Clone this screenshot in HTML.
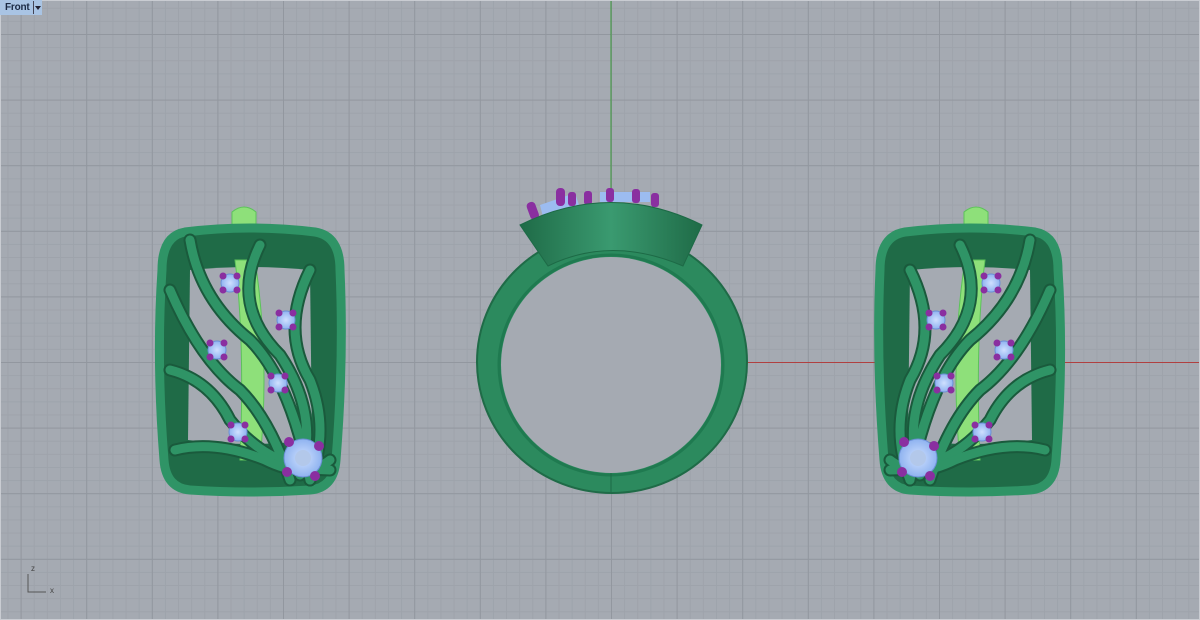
<!DOCTYPE html>
<html><head><style>
html,body{margin:0;padding:0;width:1200px;height:620px;overflow:hidden;background:#a5aab2}
.tab{position:absolute;left:0;top:0;width:42px;height:15px;background:#a9c4e4;font:bold 10px "Liberation Sans",sans-serif;color:#1b2a44;line-height:15px;padding-left:5px;box-sizing:border-box;letter-spacing:-0.2px}
.tab span{position:absolute;left:33px;top:1px;width:1px;height:13px;background:#445}
.tab i{position:absolute;left:35px;top:6px;border:3px solid transparent;border-top:4px solid #223;border-bottom:0}
</style></head><body>
<svg width="1200" height="620" style="position:absolute;left:0;top:0">
<defs>
<pattern id="mi" x="20.6" y="34" width="13.12" height="13.12" patternUnits="userSpaceOnUse"><path d="M0 0.5H13.12M0.5 0V13.12" stroke="#9ea3ab" stroke-width="1" fill="none"/></pattern>
<pattern id="ma" x="20.6" y="34" width="65.6" height="65.6" patternUnits="userSpaceOnUse"><path d="M0 0.5H65.6M0.5 0V65.6" stroke="#92979f" stroke-width="1" fill="none"/></pattern>
<radialGradient id="gem"><stop offset="0" stop-color="#cfe0ff"/><stop offset="1" stop-color="#8fb3f0"/></radialGradient>
<linearGradient id="rg" x1="0" x2="1"><stop offset="0" stop-color="#1f6b47"/><stop offset="0.5" stop-color="#3a9a70"/><stop offset="1" stop-color="#1f6b47"/></linearGradient>
<g id="ear">
 <path d="M72 -18 q12 -10 24 0 v40 h-24z" fill="#8ee07a" stroke="#5cc25a"/>
 <path d="M25 2 Q90 -6 155 2 Q180 6 180 40 Q184 130 176 230 Q174 258 150 260 Q90 264 30 260 Q6 258 4 230 Q-4 130 2 40 Q2 6 25 2z" fill="#1f6b47"/>
 <path d="M25 2 Q90 -6 155 2 Q180 6 180 40 Q184 130 176 230 Q174 258 150 260 Q90 264 30 260 Q6 258 4 230 Q-4 130 2 40 Q2 6 25 2z" fill="none" stroke="#2f9466" stroke-width="9"/>
 <path d="M30 40 Q90 34 150 40 L152 210 Q90 218 28 210z" fill="#a5aab2"/>
 <path d="M75 30 q10 80 5 200 h20 q10-100 -5-200z" fill="#8ee07a" stroke="#5cc25a"/>
 <g fill="none" stroke="#1a5a3c" stroke-width="13" stroke-linecap="round">
  <path d="M30 10 q10 60 60 100 q40 40 60 140"/>
  <path d="M100 15 q-30 60 20 110 q40 60 20 120"/>
  <path d="M150 40 q-30 60 0 110 q20 50 0 100"/>
  <path d="M10 60 q30 70 70 100 q30 30 50 90"/>
  <path d="M10 140 q40 10 60 50 q40 50 100 50"/>
  <path d="M15 220 q40 -10 90 10 q40 20 65 0"/>
 </g>
 <g fill="none" stroke="#2f9466" stroke-width="9" stroke-linecap="round">
  <path d="M30 10 q10 60 60 100 q40 40 60 140"/>
  <path d="M100 15 q-30 60 20 110 q40 60 20 120"/>
  <path d="M150 40 q-30 60 0 110 q20 50 0 100"/>
  <path d="M10 60 q30 70 70 100 q30 30 50 90"/>
  <path d="M10 140 q40 10 60 50 q40 50 100 50"/>
  <path d="M15 220 q40 -10 90 10 q40 20 65 0"/>
 </g>
</g>
<g id="st"><circle r="9" fill="url(#gem)" stroke="#6b8fd6"/><g fill="#8a2fa0"><circle cx="-7" cy="-7" r="3.5"/><circle cx="7" cy="-7" r="3.5"/><circle cx="-7" cy="7" r="3.5"/><circle cx="7" cy="7" r="3.5"/></g></g>
<g id="bg"><circle r="19" fill="url(#gem)" stroke="#6b8fd6"/><circle r="8" fill="#b3c8ea"/><g fill="#8a2fa0"><circle cx="-14" cy="-16" r="5"/><circle cx="16" cy="-12" r="5"/><circle cx="-16" cy="14" r="5"/><circle cx="12" cy="18" r="5"/></g></g>
</defs>
<rect width="1200" height="620" fill="url(#mi)"/>
<rect width="1200" height="620" fill="url(#ma)"/>
<line x1="611" y1="0" x2="611" y2="362" stroke="#3a9a3a"/>
<line x1="611" y1="362.5" x2="1200" y2="362.5" stroke="#b04040"/>
<g transform="translate(160,230)"><use href="#ear"/></g>
<use href="#st" x="230" y="283"/><use href="#st" x="286" y="320"/><use href="#st" x="217" y="350"/><use href="#st" x="278" y="383"/><use href="#st" x="238" y="432"/><use href="#bg" x="303" y="458"/>
<g transform="translate(1060,230) scale(-1,1)"><use href="#ear"/></g>
<use href="#st" x="991" y="283"/><use href="#st" x="936" y="320"/><use href="#st" x="1004" y="350"/><use href="#st" x="944" y="383"/><use href="#st" x="982" y="432"/><use href="#bg" x="918" y="458"/>
<path d="M540 205 l35 -12 l4 12 l-36 12z" fill="#9cbcf0"/>
<path d="M600 192 h50 v10 h-50z" fill="#9cbcf0"/>
<g fill="#8a2fa0"><rect x="528" y="202" width="9" height="18" rx="4" transform="rotate(-20 532 210)"/><rect x="556" y="188" width="9" height="18" rx="4"/><rect x="568" y="192" width="8" height="14" rx="3"/><rect x="584" y="191" width="8" height="14" rx="3"/><rect x="606" y="188" width="8" height="14" rx="3"/><rect x="632" y="189" width="8" height="14" rx="3"/><rect x="651" y="193" width="8" height="14" rx="3"/></g>
<ellipse cx="612" cy="362" rx="135" ry="131" fill="#2c8a5e" stroke="#1f6b47" stroke-width="2"/>
<ellipse cx="611" cy="365" rx="112" ry="110" fill="none" stroke="#1f7a50" stroke-width="3"/>
<ellipse cx="611" cy="365" rx="110" ry="108" fill="#a5aab2"/>
<path d="M520 225 Q611 180 702 225 L683 266 Q611 235 548 266z" fill="url(#rg)" stroke="#1d6a46"/>
<line x1="611" y1="473" x2="611" y2="493" stroke="#1d6a46"/>
<path d="M28 574 v18 h18" stroke="#555" fill="none"/>
<text x="31" y="571" font-family="Liberation Sans" font-size="8" fill="#444">z</text>
<text x="50" y="593" font-family="Liberation Sans" font-size="8" fill="#444">x</text>
<rect x="0.5" y="0.5" width="1199" height="619" fill="none" stroke="#c9ccd2"/>
</svg>
<div class="tab">Front<span></span><i></i></div>
</body></html>
